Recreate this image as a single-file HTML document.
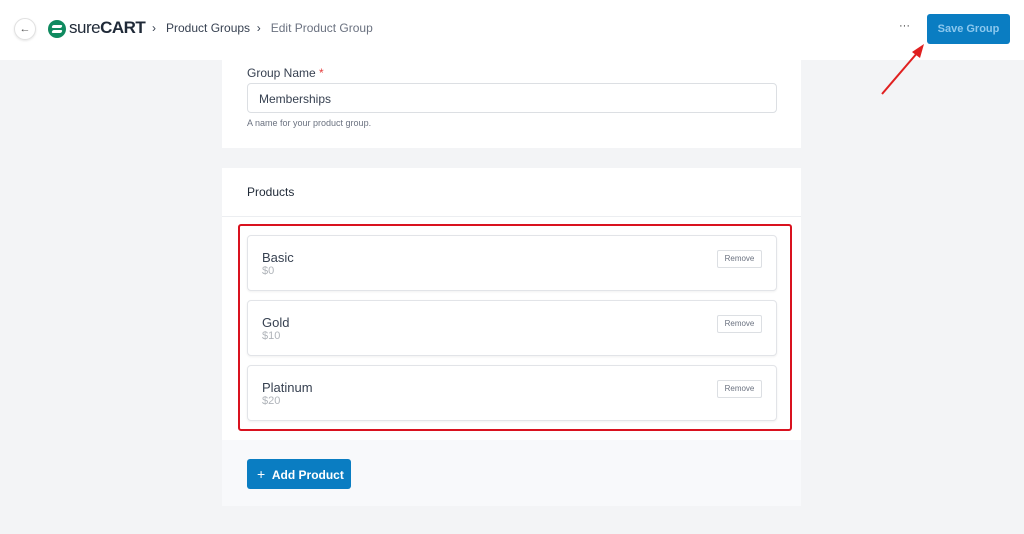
<!DOCTYPE html>
<html><head><meta charset="utf-8"><style>
*{box-sizing:border-box;margin:0;padding:0}
body{width:1024px;height:534px;overflow:hidden;background:#f3f4f6;font-family:"Liberation Sans",sans-serif;position:relative;color:#1f2937}
.hdr{position:absolute;left:0;top:0;width:1024px;height:60px;background:#fff}
.abs{position:absolute}
.card{position:absolute;left:222px;width:579px;background:#fff}
.item{position:absolute;left:247px;width:530px;height:56px;background:#fff;border:1px solid #e2e4e8;border-radius:4px;box-shadow:0 1px 2px rgba(0,0,0,.06)}
.item .n{position:absolute;left:14px;top:14px;font-size:13px;color:#374151}
.item .p{position:absolute;left:14px;top:29px;font-size:11px;color:#b0b4ba}
.item .r{position:absolute;left:469px;top:14px;width:45px;height:18px;border:1px solid #dcdfe3;border-radius:2px;font-size:8px;color:#6b7280;text-align:center;line-height:16px}
</style></head><body>
<div class="hdr"></div>
<div class="abs" style="left:14px;top:18px;width:22px;height:22px;border-radius:50%;border:1px solid #e0e0e0;box-shadow:0 1px 2px rgba(0,0,0,.1);font-size:11px;text-align:center;line-height:20px;color:#555">←</div>
<div class="abs" style="left:48px;top:20px;width:18px;height:18px;border-radius:50%;background:#0f8a5f"></div>
<div class="abs" style="left:52px;top:25px;width:10px;height:3px;background:#fff;border-radius:2px;transform:skewX(-20deg)"></div>
<div class="abs" style="left:52px;top:30px;width:10px;height:3px;background:#fff;border-radius:2px;transform:skewX(-20deg)"></div>
<div class="abs" style="left:69px;top:18px;font-size:17px;color:#1f2937;letter-spacing:-.5px">sure<b>CART</b></div>
<div class="abs" style="left:152px;top:21px;font-size:12px;color:#374151">›&nbsp;&nbsp; Product Groups &nbsp;›&nbsp;&nbsp; <span style="color:#6b7280">Edit Product Group</span></div>
<div class="abs" style="left:899px;top:20px;font-size:11px;color:#333">···</div>
<div class="abs" style="left:927px;top:14px;width:83px;height:30px;background:#0a7dc2;border-radius:3px;color:#8cc8ee;font-size:11px;font-weight:bold;text-align:center;line-height:30px">Save Group</div>
<svg class="abs" style="left:878px;top:40px" width="52" height="58"><line x1="4" y1="54" x2="40" y2="12" stroke="#e02020" stroke-width="2"/><polygon points="46,4 34,12 42,18" fill="#e02020"/></svg>

<div class="card" style="top:60px;height:88px"></div>
<div class="abs" style="left:247px;top:66px;font-size:12px;color:#374151">Group Name <span style="color:#e53e3e">*</span></div>
<div class="abs" style="left:247px;top:83px;width:530px;height:30px;border:1px solid #dcdfe3;border-radius:4px;font-size:12px;color:#374151;padding:8px 11px">Memberships</div>
<div class="abs" style="left:247px;top:118px;font-size:9px;color:#6b7280">A name for your product group.</div>

<div class="card" style="top:168px;height:338px;background:#f8f9fb"></div>
<div class="card" style="top:168px;height:272px"></div>
<div class="abs" style="left:222px;top:216px;width:579px;height:1px;background:#eceef1"></div>
<div class="abs" style="left:247px;top:185px;font-size:12px;color:#1f2937">Products</div>
<div class="abs" style="left:238px;top:224px;width:554px;height:207px;border:2px solid #d9121f;border-radius:3px"></div>
<div class="item" style="top:235px"><div class="n">Basic</div><div class="p">$0</div><div class="r">Remove</div></div>
<div class="item" style="top:300px"><div class="n">Gold</div><div class="p">$10</div><div class="r">Remove</div></div>
<div class="item" style="top:365px"><div class="n">Platinum</div><div class="p">$20</div><div class="r">Remove</div></div>
<div class="abs" style="left:247px;top:459px;width:104px;height:30px;background:#0a7dc2;border-radius:3px;color:#fff;font-size:12px;font-weight:bold;line-height:30px;padding-left:10px"><span style="font-weight:normal;font-size:14px">+</span>&nbsp;&nbsp;Add Product</div>
</body></html>
